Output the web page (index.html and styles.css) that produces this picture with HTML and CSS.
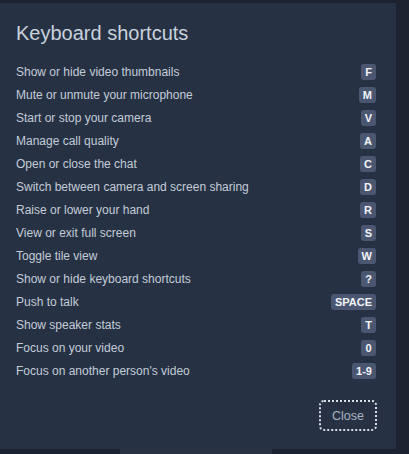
FILE: index.html
```html
<!DOCTYPE html>
<html>
<head>
<meta charset="utf-8">
<link rel="stylesheet" href="styles.css">
</head>
<body>
<div class="dialog">
  <h1 class="title">Keyboard shortcuts</h1>
  <ul class="list">
    <li class="row"><span class="label">Show or hide video thumbnails</span><span class="key">F</span></li>
    <li class="row"><span class="label">Mute or unmute your microphone</span><span class="key">M</span></li>
    <li class="row"><span class="label">Start or stop your camera</span><span class="key">V</span></li>
    <li class="row"><span class="label">Manage call quality</span><span class="key">A</span></li>
    <li class="row"><span class="label">Open or close the chat</span><span class="key">C</span></li>
    <li class="row"><span class="label">Switch between camera and screen sharing</span><span class="key">D</span></li>
    <li class="row"><span class="label">Raise or lower your hand</span><span class="key">R</span></li>
    <li class="row"><span class="label">View or exit full screen</span><span class="key">S</span></li>
    <li class="row"><span class="label">Toggle tile view</span><span class="key">W</span></li>
    <li class="row"><span class="label">Show or hide keyboard shortcuts</span><span class="key">?</span></li>
    <li class="row"><span class="label">Push to talk</span><span class="key">SPACE</span></li>
    <li class="row"><span class="label">Show speaker stats</span><span class="key">T</span></li>
    <li class="row"><span class="label">Focus on your video</span><span class="key">0</span></li>
    <li class="row"><span class="label">Focus on another person's video</span><span class="key">1-9</span></li>
  </ul>
  <div class="footer"><button class="close">Close</button></div>
</div>
<div class="strip"></div>
</body>
</html>
```
FILE: styles.css
```css
html, body {
  margin: 0;
  padding: 0;
  background: #1c2230;
  font-family: "Liberation Sans", Arial, sans-serif;
  width: 409px;
  height: 454px;
  overflow: hidden;
}
.dialog {
  margin-top: 3px;
  width: 396px;
  height: 446px;
  background: #263244;
  box-sizing: border-box;
  padding: 18px 20px 0 16px;
}
.title {
  margin: 0;
  font-size: 20px;
  font-weight: normal;
  color: #c9d1dd;
  line-height: 24px;
}
.list {
  list-style: none;
  margin: 15px 0 0 0;
  padding: 0;
}
.row {
  display: flex;
  align-items: center;
  justify-content: space-between;
  height: 23px;
}
.label {
  font-size: 12px;
  color: #c4ccd8;
}
.key {
  background: #4b5771;
  color: #f2f4f8;
  font-size: 11px;
  font-weight: bold;
  line-height: 16px;
  padding: 0 4px;
  min-width: 7px;
  text-align: center;
  border-radius: 3px;
}
.footer {
  display: flex;
  justify-content: flex-end;
  margin-top: 18px;
  margin-right: -1px;
}
.close {
  width: 58px;
  height: 31px;
  background: transparent;
  border: 2px dotted #d8dee8;
  border-radius: 5px;
  color: #a9b2c0;
  font-family: "Liberation Sans", Arial, sans-serif;
  font-size: 12.5px;
  padding: 0;
}
.strip {
  margin-left: 120px;
  width: 152px;
  height: 5px;
  background: #2a3343;
}
```
